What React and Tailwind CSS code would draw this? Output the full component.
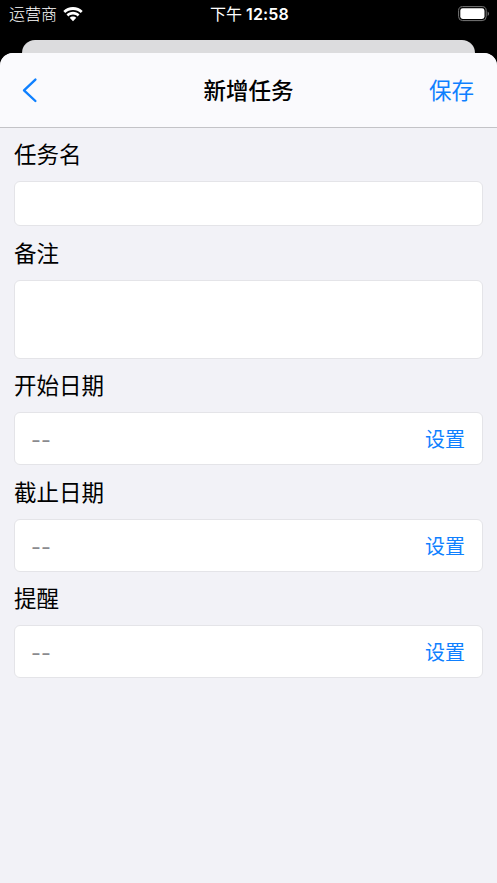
import React from 'react';

const Field = ({ label, className, children }) => (
  <div className="flex flex-col">
    <label className="flex h-[53.7px] items-center pt-[2px] text-[22.5px] leading-none">{label}</label>
    <div className={`rounded-[6px] border border-[#e4e4e8] bg-white ${className}`}>{children}</div>
  </div>
);

const DateRow = () => (
  <div className="flex h-full items-center justify-between pt-[3px] pr-[17px] pl-[16px] text-[20px]">
    <span className="text-[21.5px] text-[#8a8a8e]">--</span>
    <button className="text-[#0f80ff]">设置</button>
  </div>
);

const StatusBar = () => (
  <div className="grid h-10 shrink-0 grid-cols-3 items-start pr-[7px] pl-[9px] text-[16px] leading-[28px] text-white">
    <div className="flex items-center gap-[6px]">
      <span className="font-light">运营商</span>
      <svg width="20" height="15" viewBox="0 0 20 15" fill="#fff">
        <path d="M10 0C6.200 0 2.800 1.500.3 4L2.200 6C4.300 4 7 2.900 10 2.900s5.700 1.100 7.800 3.100L19.700 4C17.200 1.500 13.800 0 10 0Z" />
        <path d="M10 4.800c-2.500 0-4.800 1-6.500 2.600l1.900 2C6.600 8.200 8.200 7.500 10 7.500s3.400.7 4.600 1.900l1.900-2C14.800 5.800 12.500 4.800 10 4.800Z" />
        <path d="M10 9.400c-1.300 0-2.400.5-3.300 1.300L10 14.300l3.300-3.600C12.400 9.900 11.300 9.400 10 9.400Z" />
      </svg>
    </div>
    <span className="flex justify-center gap-1 whitespace-nowrap">
      <span>下午</span>
      <span className="font-semibold tracking-[0.2px]">12:58</span>
    </span>
    <div className="flex h-[27px] items-center justify-end">
      <svg width="32" height="16" viewBox="0 0 32 16">
        <rect x=".6" y=".6" width="27.600" height="14" rx="4" fill="none" stroke="#777" />
        <rect x="2.300" y="2.300" width="24.200" height="10.600" rx="2.400" fill="#fff" />
        <path d="M29.700 5.500v4.500c1.800-.8 1.800-3.700 0-4.500Z" fill="#777" />
      </svg>
    </div>
  </div>
);

export default function App() {
  return (
    <div className="flex h-[883px] w-[497px] flex-col overflow-hidden bg-black font-['Inter','Noto_Sans_CJK_SC',sans-serif] text-black">
      <StatusBar />
      <div className="mx-[22px] h-[13px] shrink-0 rounded-t-[13px] bg-[#dcdcde]" />
      <div className="flex flex-1 flex-col rounded-t-[13px] bg-[#f2f2f7]">
        <header className="grid h-[74.5px] shrink-0 grid-cols-3 items-center rounded-t-[13px] border-b border-[#c3c3c7] bg-[#fafafd] px-[22px] pt-[1px] text-[22.500px]">
          <svg width="16" height="26" viewBox="0 0 16 26" fill="none" stroke="#0f80ff" strokeWidth="2.400" strokeLinecap="round" strokeLinejoin="round">
            <path d="M13.400 2.600 2 13.300l11.400 10.700" />
          </svg>
          <h1 className="pt-[1px] text-center font-medium">新增任务</h1>
          <button className="pt-[1px] pr-[1px] text-right text-[#0f80ff]">保存</button>
        </header>
        <main className="flex flex-col px-[14px]">
          <Field label="任务名" className="h-[44.9px]" />
          <Field label="备注" className="h-[78.8px]" />
          <Field label="开始日期" className="h-[52.8px]"><DateRow /></Field>
          <Field label="截止日期" className="h-[52.8px]"><DateRow /></Field>
          <Field label="提醒" className="h-[52.8px]"><DateRow /></Field>
        </main>
      </div>
    </div>
  );
}
